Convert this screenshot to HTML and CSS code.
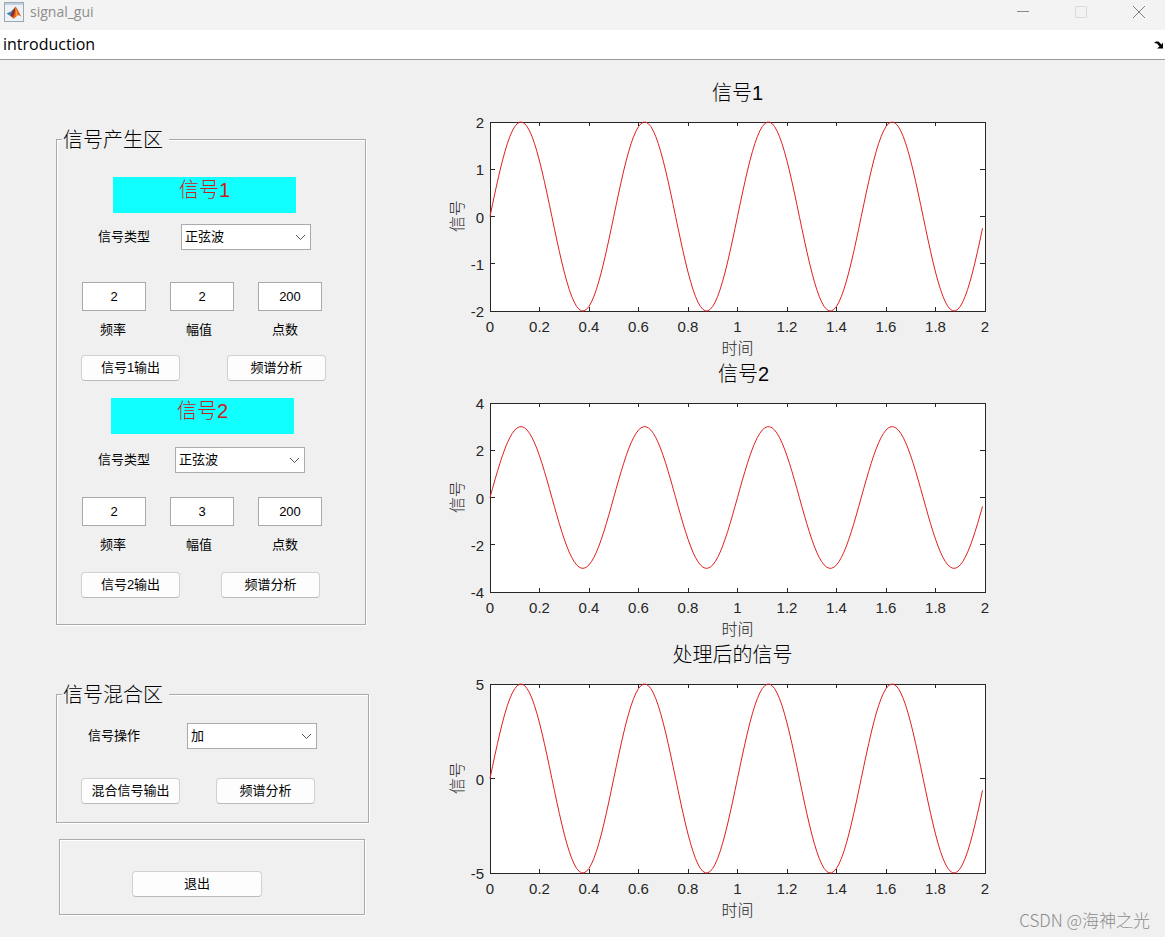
FILE: index.html
```html
<!DOCTYPE html>
<html lang="zh-CN">
<head>
<meta charset="utf-8">
<title>signal_gui</title>
<link rel="stylesheet" href="styles.css">
</head>
<body>
<header class="titlebar">
  <svg class="app-icon" viewBox="0 0 20 20" aria-hidden="true">
    <rect x="0.5" y="0.5" width="19" height="19" fill="#eef2f6" stroke="#9aa9b8"/>
    <rect x="1" y="1" width="18" height="2" fill="#c3d0de"/>
    <path d="M2.500 11.500L7 9.500L9.500 7L8.500 13L6.500 14Z" fill="#3f7fc0"/>
    <path d="M6.500 14L9 8L11.500 4.500L12.500 11L9 16Z" fill="#8c2a1c"/>
    <path d="M11.500 4.500C13.500 6 15 11 17.500 14.500L14 13L9.500 17L8.500 14.500C11 12.500 11 8 11.500 4.500Z" fill="#e0641f"/>
    <path d="M11.500 5C12.500 7 13 10 13.500 13L12 14C12 11 11.500 8 11.500 5Z" fill="#f5a53a"/>
  </svg>
  <span class="app-name">signal_gui</span>
  <div class="window-buttons">
    <button class="window-button" aria-label="最小化"><svg viewBox="0 0 14 14"><path d="M1 6.500H13" stroke="#888"/></svg></button>
    <button class="window-button" aria-label="最大化" disabled><svg viewBox="0 0 14 14"><path d="M1.500 1.500H12.500V12.500H1.500Z" stroke="#dadada"/></svg></button>
    <button class="window-button" aria-label="关闭"><svg viewBox="0 0 14 14"><path d="M1 1L13 13M13 1L1 13" stroke="#808080"/></svg></button>
  </div>
</header>
<nav class="menubar">
  <button class="menu-item">introduction</button>
  <button class="dock" aria-label="停靠"><svg viewBox="0 0 10 8"><path d="M0 2L2 0.500H4.500L7.500 3.500L9 1.500V7.500H3L5.500 5.500L3 2.500Z" fill="#000"/></svg></button>
</nav>
<main class="workspace">
  <div class="controls">
    <fieldset class="panel panel-generate">
      <legend class="panel-title">信号产生区</legend>
      <h2 class="banner">信号1</h2>
      <div class="choice">
        <label class="choice-label" for="type1">信号类型</label>
        <span class="select"><select id="type1"><option>正弦波</option></select><svg viewBox="0 0 11 7"><path d="M1 1L5.500 5.500L10 1"/></svg></span>
      </div>
      <div class="fields">
        <input id="freq1" value="2"><input id="amp1" value="2"><input id="count1" value="200">
      </div>
      <div class="captions">
        <label for="freq1">频率</label><label for="amp1">幅值</label><label for="count1">点数</label>
      </div>
      <div class="actions"><button class="push">信号1输出</button><button class="push">频谱分析</button></div>
      <h2 class="banner banner-second">信号2</h2>
      <div class="choice choice-second">
        <label class="choice-label" for="type2">信号类型</label>
        <span class="select"><select id="type2"><option>正弦波</option></select><svg viewBox="0 0 11 7"><path d="M1 1L5.500 5.500L10 1"/></svg></span>
      </div>
      <div class="fields fields-second">
        <input id="freq2" value="2"><input id="amp2" value="3"><input id="count2" value="200">
      </div>
      <div class="captions">
        <label for="freq2">频率</label><label for="amp2">幅值</label><label for="count2">点数</label>
      </div>
      <div class="actions actions-second"><button class="push">信号2输出</button><button class="push">频谱分析</button></div>
    </fieldset>
    <fieldset class="panel panel-mix">
      <legend class="panel-title">信号混合区</legend>
      <div class="choice choice-mix">
        <label class="choice-label" for="op">信号操作</label>
        <span class="select"><select id="op"><option>加</option></select><svg viewBox="0 0 11 7"><path d="M1 1L5.500 5.500L10 1"/></svg></span>
      </div>
      <div class="actions actions-mix"><button class="push">混合信号输出</button><button class="push">频谱分析</button></div>
    </fieldset>
    <section class="panel panel-exit"><button class="push push-wide">退出</button></section>
  </div>
  <div class="charts">
    <section class="chart">
      <h2 class="chart-title">信号1</h2>
      <span class="y-label">信号</span>
      <div class="y-ticks"><span>2</span><span>1</span><span>0</span><span>-1</span><span>-2</span></div>
      <svg class="plot" data-amplitude="2" data-limit="2" data-steps="4"></svg>
      <div class="x-ticks"><span>0</span><span>0.2</span><span>0.4</span><span>0.6</span><span>0.8</span><span>1</span><span>1.2</span><span>1.4</span><span>1.6</span><span>1.8</span><span>2</span></div>
      <span class="x-label">时间</span>
    </section>
    <section class="chart">
      <h2 class="chart-title chart-title-second">信号2</h2>
      <span class="y-label">信号</span>
      <div class="y-ticks"><span>4</span><span>2</span><span>0</span><span>-2</span><span>-4</span></div>
      <svg class="plot" data-amplitude="3" data-limit="4" data-steps="4"></svg>
      <div class="x-ticks"><span>0</span><span>0.2</span><span>0.4</span><span>0.6</span><span>0.8</span><span>1</span><span>1.2</span><span>1.4</span><span>1.6</span><span>1.8</span><span>2</span></div>
      <span class="x-label">时间</span>
    </section>
    <section class="chart">
      <h2 class="chart-title chart-title-mix">处理后的信号</h2>
      <span class="y-label">信号</span>
      <div class="y-ticks"><span>5</span><span>0</span><span>-5</span></div>
      <svg class="plot" data-amplitude="5" data-limit="5" data-steps="2"></svg>
      <div class="x-ticks"><span>0</span><span>0.2</span><span>0.4</span><span>0.6</span><span>0.8</span><span>1</span><span>1.2</span><span>1.4</span><span>1.6</span><span>1.8</span><span>2</span></div>
      <span class="x-label">时间</span>
    </section>
  </div>
</main>
<div class="watermark">CSDN @海神之光</div>
<script src="plots.js"></script>
</body>
</html>
```
FILE: styles.css
```css
* { box-sizing: border-box; }

body {
  position: relative;
  margin: 0;
  min-height: 100vh;
  background: #f0f0f0;
  color: #000;
  font: 13px/20px "Liberation Sans", "Noto Sans CJK SC", sans-serif;
}

button, input, select { font: inherit; color: inherit; }

.titlebar {
  display: flex;
  align-items: center;
  height: 30px;
  padding: 0 12px 6px 4px;
  background: #f3f3f3;
}
.app-icon { width: 20px; height: 20px; }
.app-name {
  margin-left: 6px;
  color: #8c8c8c;
  font: 14px/20px "Open Sans", "Noto Sans", sans-serif;
}
.window-buttons { display: flex; gap: 30px; margin-left: auto; }
.window-button { width: 28px; height: 20px; padding: 0; border: 0; background: none; }
.window-button svg { display: block; width: 14px; height: 14px; margin: 0 auto; fill: none; }

.menubar {
  display: flex;
  align-items: center;
  justify-content: space-between;
  height: 30px;
  border-bottom: 1px solid #999;
  background: #fff;
}
.menu-item {
  padding: 0 3px 2px;
  border: 0;
  background: none;
  font: 16px/26px "Open Sans", "Noto Sans", sans-serif;
}
.dock { padding: 0 1px 0 0; border: 0; background: none; }
.dock svg { display: block; width: 10px; height: 8px; }

.workspace {
  display: grid;
  grid-template-columns: 314px minmax(0, 1fr);
  gap: 80px;
  padding: 0 180px 0 56px;
}

.controls { padding-top: 65px; }
.panel {
  min-width: 0;
  margin: 0;
  padding: 0;
  border: 1px solid #aaa;
  box-shadow: 1px 1px 0 #fff, inset 1px 1px 0 #fff;
}
.panel-title {
  margin-left: 5px;
  padding: 2px 6px 0 1px;
  background: #f0f0f0;
  font-size: 20px;
  line-height: 26px;
  font-weight: 300;
}
.panel-generate { width: 310px; padding-bottom: 26px; }
.panel-mix { width: 313px; margin-top: 55px; padding-bottom: 18px; }
.panel-exit {
  width: 306px;
  margin: 16px 0 0 3px;
  padding: 31px 72px 17px;
}

.banner {
  width: 183px;
  height: 36px;
  margin: 24px 0 0 56px;
  background: #10ffff;
  color: #c8201c;
  font-size: 20px;
  line-height: 26px;
  font-weight: 300;
  text-align: center;
}
.banner-second { margin: 17px 0 0 54px; }

.choice {
  display: flex;
  align-items: center;
  gap: 31px;
  margin: 11px 0 0 41px;
}
.choice-second { gap: 25px; margin-top: 13px; }
.choice-mix { gap: 47px; margin: 15px 0 0 31px; }

.select { position: relative; display: block; width: 130px; }
.select select {
  display: block;
  width: 100%;
  height: 26px;
  padding: 0 3px;
  border: 1px solid #aaa;
  border-radius: 0;
  background: #fff;
  appearance: none;
}
.select svg {
  position: absolute;
  right: 5px;
  top: 10px;
  width: 11px;
  height: 7px;
  fill: none;
  stroke: #555;
  pointer-events: none;
}

.fields { display: flex; gap: 24px; margin: 32px 0 0 25px; }
.fields-second { margin-top: 24px; }
.fields input {
  width: 64px;
  height: 29px;
  padding: 0;
  border: 1px solid #aaa;
  background: #fff;
  text-align: center;
}
.captions { display: flex; gap: 24px; margin: 9px 0 0 25px; }
.captions label { width: 62px; text-align: center; }

.actions { display: flex; gap: 47px; margin: 15px 0 0 24px; }
.actions-second { gap: 41px; margin-top: 17px; }
.actions-mix { gap: 36px; margin-top: 29px; }
.push {
  width: 99px;
  height: 26px;
  padding: 0;
  border: 1px solid #d0d0d0;
  border-bottom-color: #bbb;
  border-radius: 4px;
  background: #fdfdfd;
  white-space: nowrap;
}
.push-wide { width: 130px; }

.charts { padding-top: 18px; }
.chart {
  display: grid;
  grid-template-columns: 16px 24px minmax(0, 1fr);
  grid-template-rows: 44px 189px 26px 22px;
  color: #262626;
}
.chart-title {
  grid-column: 3;
  margin: 0;
  color: #000;
  font-size: 20px;
  line-height: 30px;
  font-weight: 300;
  text-align: center;
}
.chart-title-second { padding-left: 12px; }
.chart-title-mix { padding-right: 10px; }
.y-label {
  align-self: center;
  font-size: 16px;
  line-height: 16px;
  font-weight: 300;
  writing-mode: vertical-rl;
  text-orientation: sideways;
  transform: rotate(180deg);
}
.y-ticks {
  display: flex;
  flex-direction: column;
  justify-content: space-between;
  padding-right: 6px;
  font-size: 15px;
  text-align: right;
}
.y-ticks span { height: 0; line-height: 2px; }
.plot {
  width: 100%;
  height: 100%;
  overflow: visible;
}
.plot-frame { fill: #fff; stroke: #262626; shape-rendering: crispEdges; }
.plot-tick { stroke: #262626; shape-rendering: crispEdges; }
.plot-curve { overflow: visible; fill: none; stroke: #e02020; }
.x-ticks {
  grid-column: 3;
  display: flex;
  justify-content: space-between;
  padding-top: 6px;
  font-size: 15px;
}
.x-ticks span { display: flex; justify-content: center; width: 0; }
.x-label {
  grid-column: 3;
  font-size: 16px;
  line-height: 24px;
  font-weight: 300;
  text-align: center;
}

.watermark {
  position: absolute;
  right: 15px;
  bottom: 5px;
  color: #8c8c8c;
  font: 300 17px/24px "Noto Sans CJK SC", sans-serif;
}
```
FILE: plots.js
```js
const NS = "http://www.w3.org/2000/svg";

function add(parent, name, attributes) {
  const node = document.createElementNS(NS, name);
  for (const [key, value] of Object.entries(attributes)) node.setAttribute(key, value);
  parent.appendChild(node);
  return node;
}

document.querySelectorAll(".plot").forEach((plot) => {
  const ratio = plot.dataset.amplitude / plot.dataset.limit;
  const steps = Number(plot.dataset.steps);
  add(plot, "rect", { class: "plot-frame", width: "100%", height: "100%" });

  for (let i = 1; i < 10; i++) {
    const x = i * 10 + "%";
    add(plot, "line", { class: "plot-tick", x1: x, x2: x, y1: "0%", y2: "2%" });
    add(plot, "line", { class: "plot-tick", x1: x, x2: x, y1: "98%", y2: "100%" });
  }
  for (let i = 1; i < steps; i++) {
    const y = (i * 100) / steps + "%";
    add(plot, "line", { class: "plot-tick", x1: "0%", x2: "1%", y1: y, y2: y });
    add(plot, "line", { class: "plot-tick", x1: "99%", x2: "100%", y1: y, y2: y });
  }

  // 200 samples of a 2 Hz sine over two seconds
  const points = [];
  for (let n = 0; n < 200; n++) {
    points.push(n + "," + (100 - 100 * ratio * Math.sin((4 * Math.PI * n) / 100)).toFixed(2));
  }
  const curve = add(plot, "svg", {
    class: "plot-curve", width: "100%", height: "100%",
    viewBox: "0 0 200 200", preserveAspectRatio: "none"
  });
  add(curve, "polyline", { points: points.join(" "), "vector-effect": "non-scaling-stroke" });
});
```
